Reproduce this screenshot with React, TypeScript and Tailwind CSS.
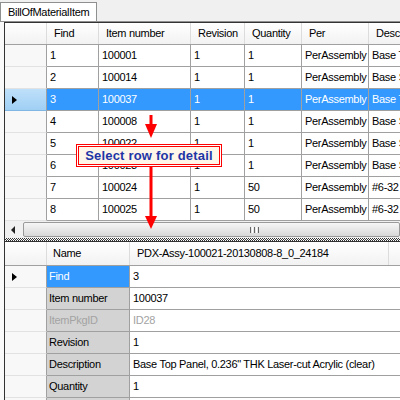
import React from 'react';

const upperRows = [
  ['1', '100001', '1', '1', 'PerAssembly', 'Base Top Panel'],
  ['2', '100014', '1', '1', 'PerAssembly', 'Base Side Panel'],
  ['3', '100037', '1', '1', 'PerAssembly', 'Base Top Panel'],
  ['4', '100008', '1', '1', 'PerAssembly', 'Base Side Panel'],
  ['5', '100022', '1', '1', 'PerAssembly', 'Base Side Panel'],
  ['6', '100023', '1', '1', 'PerAssembly', 'Base Side Panel'],
  ['7', '100024', '1', '50', 'PerAssembly', '#6-32 Screw'],
  ['8', '100025', '1', '50', 'PerAssembly', '#6-32 Nut'],
];

const upperHeaders = ['Find', 'Item number', 'Revision', 'Quantity', 'Per', 'Description'];
const upperWidths = ['w-[52px]', 'w-[92px]', 'w-[54px]', 'w-[57px]', 'w-[67px]', 'w-[140px]'];

const detailRows: [string, string, boolean?][] = [
  ['Find', '3'],
  ['Item number', '100037'],
  ['ItemPkgID', 'ID28', true],
  ['Revision', '1'],
  ['Description', 'Base Top Panel, 0.236" THK Laser-cut Acrylic (clear)'],
  ['Quantity', '1'],
  ['', ''],
];

function Pointer() {
  return <div className="w-0 h-0 border-y-[4.5px] border-y-transparent border-l-[5px] border-l-black" />;
}

function RowHeader({ selected, current }: { selected?: boolean; current?: boolean }) {
  return (
    <div
      className={
        'w-[42px] shrink-0 h-[22px] border-r border-r-[#a0a0a0] border-b flex items-center pl-[7px] ' +
        (selected
          ? 'bg-linear-to-b from-[#bfe0fa] to-[#9fcff4] border-b-[#7fb6e4]'
          : 'bg-[#f8f8f8] border-b-[#e2e2e2]')
      }
    >
      {current && <Pointer />}
    </div>
  );
}

function UpperGrid() {
  return (
    <div className="flex flex-col">
      <div className="flex h-[22px] border-b border-[#a0a0a0] bg-linear-to-b from-white to-[#f2f2f2]">
        <div className="w-[42px] shrink-0 border-r border-[#dcdcdc]" />
        {upperHeaders.map((h, i) => (
          <div
            key={h}
            className={upperWidths[i] + ' shrink-0 border-r border-[#dcdcdc] flex items-center pl-[7px] whitespace-nowrap overflow-hidden'}
          >
            {h}
          </div>
        ))}
      </div>
      {upperRows.map((r, ri) => {
        const sel = ri === 2;
        return (
          <div key={ri} className="flex">
            <RowHeader selected={sel} current={sel} />
            {r.map((c, ci) => (
              <div
                key={ci}
                className={
                  upperWidths[ci] +
                  ' shrink-0 h-[22px] border-r border-b border-[#a0a0a0] flex items-center pl-[3px] whitespace-nowrap overflow-hidden ' +
                  (sel ? 'bg-[#3399ff] text-white' : 'bg-white')
                }
              >
                {c}
              </div>
            ))}
          </div>
        );
      })}
    </div>
  );
}

function ScrollBar() {
  return (
    <div className="flex h-[17px] bg-[#f0f0f0]">
      <div className="w-[18px] shrink-0 flex items-center justify-center pr-[2px]">
        <div className="w-0 h-0 border-y-[4px] border-y-transparent border-r-[4px] border-r-[#222]" />
      </div>
      <div className="flex-1 my-[1px] rounded-[2px] border border-[#9a9a9a] bg-linear-to-b from-[#f6f6f6] to-[#d8d8d8] flex items-center pl-[226px] gap-[1px]">
        <div className="w-[1px] h-[6px] bg-[#666]" />
        <div className="w-[1px] h-[6px] bg-white" />
        <div className="w-[1px] h-[6px] bg-[#666]" />
        <div className="w-[1px] h-[6px] bg-white" />
        <div className="w-[1px] h-[6px] bg-[#666]" />
      </div>
    </div>
  );
}

function DetailGrid() {
  return (
    <div className="flex flex-col border-t border-[#333]">
      <div className="flex h-[24px] border-b border-[#a0a0a0] bg-linear-to-b from-white to-[#f2f2f2]">
        <div className="w-[42px] shrink-0 border-r border-[#dcdcdc]" />
        <div className="w-[83px] shrink-0 border-r border-[#dcdcdc] flex items-center pl-[6px]">Name</div>
        <div className="w-[259px] shrink-0 border-r border-[#dcdcdc] flex items-center pl-[7px] whitespace-nowrap">
          PDX-Assy-100021-20130808-8_0_24184
        </div>
        <div className="flex-1" />
      </div>
      {detailRows.map(([name, value, disabled], ri) => {
        const sel = ri === 0;
        return (
          <div key={ri} className="flex">
            <RowHeader current={sel} />
            <div
              className={
                'w-[83px] shrink-0 h-[22px] border-r border-b border-[#a0a0a0] flex items-center pl-[2px] whitespace-nowrap ' +
                (sel ? 'bg-[#3399ff] text-white' : 'bg-[#d3d3d3] ') +
                (disabled ? 'text-[#a3a3a3]' : '')
              }
            >
              {name}
            </div>
            <div
              className={
                'flex-1 h-[22px] border-b border-[#a0a0a0] bg-white flex items-center pl-[3px] whitespace-nowrap overflow-hidden ' +
                (disabled ? 'text-[#a3a3a3]' : 'text-black')
              }
            >
              {value}
            </div>
          </div>
        );
      })}
    </div>
  );
}

export default function App() {
  return (
    <div className="relative w-[400px] h-[400px] overflow-hidden bg-[#f0f0f0] font-['Liberation_Sans',Arial,sans-serif] text-[11px] tracking-[-0.3px] leading-none text-black">
      {/* tab strip */}
      <div className="flex h-[21px] items-end">
        <div className="w-[97px] h-[19px] bg-white border border-b-0 border-[#8e8f8f] flex items-center pl-[7px] whitespace-nowrap">
          BillOfMaterialItem
        </div>
      </div>

      {/* tab page */}
      <div className="border-t border-[#8e8f8f] bg-[#fafafa] pl-[4px]">
        <div className="border-l border-[#333] bg-white">
          <div className="border-t border-[#333]">
            <UpperGrid />
            <ScrollBar />
          </div>
          <div className="h-[3px] bg-[conic-gradient(#333_25%,#fff_0_50%,#333_0_75%,#fff_0)] bg-[length:2px_2px]" />
          <DetailGrid />
        </div>
      </div>

      {/* callout overlay */}
      <svg className="absolute left-0 top-0 pointer-events-none" width="400" height="400">
        <rect x="149.5" y="115" width="3" height="11" fill="#ff0000" />
        <polygon points="145,124 157,124 151,138" fill="#ff0000" />
        <rect x="149.5" y="167" width="3" height="51" fill="#ff0000" />
        <polygon points="145,216 157,216 151,229" fill="#ff0000" />
      </svg>
      <div className="absolute left-[76px] top-[144px] w-[146px] h-[23px] border border-[#ff0000] bg-white p-[1px]">
        <div className="h-full border border-[#ff0000] bg-[#fff6ea] flex items-center justify-center text-[13px] font-bold tracking-[0.2px] text-[#1e35a6] whitespace-nowrap">
          Select row for detail
        </div>
      </div>
    </div>
  );
}
